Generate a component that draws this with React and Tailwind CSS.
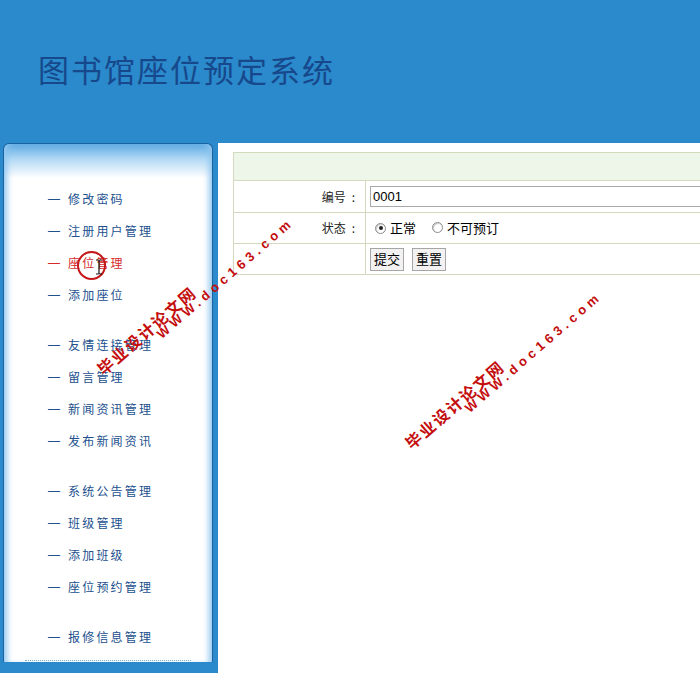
import React from 'react';

const groups = [
    ['修改密码', '注册用户管理', '座位管理', '添加座位'],
    ['友情连接管理', '留言管理', '新闻资讯管理', '发布新闻资讯'],
    ['系统公告管理', '班级管理', '添加班级', '座位预约管理'],
    ['报修信息管理'],
];

const Watermark = ({ x, y }) => (
    <div
        className="absolute pointer-events-none text-[#c40d0d] font-bold leading-none"
        style={{ left: x, top: y, transform: 'rotate(-41deg)', transformOrigin: 'left top' }}
    >
        <div className="text-[16px] tracking-[1.8px] whitespace-nowrap font-['Noto_Sans_CJK_SC',sans-serif]">毕业设计论文网</div>
        <div className="ml-[68px] mt-[-2px] text-[13px] tracking-[4.4px] whitespace-nowrap font-['Liberation_Sans',Arial,sans-serif]">WWW.doc163.com</div>
    </div>
);

const Radio = ({ checked }) => (
    <span className="inline-flex items-center justify-center w-[11px] h-[11px] rounded-full border border-[#8a8a8a] bg-white shadow-[inset_1px_1px_1px_#ccc]">
        {checked && <span className="w-[4px] h-[4px] rounded-full bg-[#222]" />}
    </span>
);

const Label = ({ text }) => (
    <span>
        {text}
        <span className="ml-[6px]">:</span>
    </span>
);

export default function App() {
    return (
        <div className="relative w-[700px] h-[673px] overflow-hidden bg-[#2a8acb] font-['Noto_Sans_CJK_SC',sans-serif]">
            <div className="h-[143px] flex items-center pl-[38px] pb-[4px]">
                <h1 className="text-[31px] text-[#17488c] tracking-[2px] font-normal">图书馆座位预定系统</h1>
            </div>

            <div className="flex h-[530px]">
                <div className="w-[218px] pl-[3px] pr-[5px]">
                    <div className="h-[519px] flex flex-col border border-b-0 border-[#1b63a0] rounded-t-[6px] bg-[linear-gradient(to_bottom,#5eaae3_0px,#b6dbf5_16px,#ffffff_34px,#ffffff_100%)] shadow-[inset_7px_0_6px_-4px_#8fc6ef,inset_-7px_0_6px_-4px_#8fc6ef]">
                        <div className="pt-[39px] pl-[44px] flex-1">
                            {groups.map((items, gi) => (
                                <ul key={gi} className={gi > 0 ? 'mt-[18px]' : ''}>
                                    {items.map((item) => {
                                        const active = item === '座位管理';
                                        return (
                                            <li
                                                key={item}
                                                className={`relative h-[32px] flex items-center text-[12px] tracking-[2.2px] ${active ? 'text-[#d42a2a]' : 'text-[#22508e]'}`}
                                            >
                                                <span className="w-[20px] font-['Liberation_Sans',sans-serif]">—</span>
                                                <span>{item}</span>
                                                {active && (
                                                    <>
                                                        <span className="absolute left-[29px] top-[4px] w-[29px] h-[29px] rounded-full border-2 border-[#c41818]" />
                                                        <svg className="absolute left-[47px] top-[12px]" width="8" height="16" viewBox="0 0 8 16">
                                                            <path d="M1 1h2.5M4.5 1H7M4 1v14M1 15h2.5M4.5 15H7" stroke="#111" strokeWidth="1.2" fill="none" />
                                                        </svg>
                                                    </>
                                                )}
                                            </li>
                                        );
                                    })}
                                </ul>
                            ))}
                        </div>
                        <div className="mx-[21px] mb-[1px] border-t border-dotted border-[#7fb0c8]" />
                    </div>
                </div>

                <div className="flex-1 bg-white overflow-hidden pt-[9px] pl-[15px] text-[12px] text-[#222]">
                    <table className="w-[560px] border-collapse">
                        <tbody>
                            <tr className="h-[28px] bg-[#eef5e9]">
                                <td colSpan={2} className="border border-[#d5d9bd]" />
                            </tr>
                            <tr className="h-[32px]">
                                <td className="w-[132px] border border-[#d5d9bd] text-right pr-[10px]"><Label text="编号" /></td>
                                <td className="border border-[#d5d9bd] pl-[4px]">
                                    <div className="h-[21px] border border-[#a9a9a9] flex items-center pl-[2px] text-[13px] text-black font-['Liberation_Sans',Arial,sans-serif]">0001</div>
                                </td>
                            </tr>
                            <tr className="h-[31px]">
                                <td className="border border-[#d5d9bd] text-right pr-[10px]"><Label text="状态" /></td>
                                <td className="border border-[#d5d9bd] pl-[9px]">
                                    <div className="flex items-center text-[13px] text-black">
                                        <Radio checked />
                                        <span className="ml-[4px]">正常</span>
                                        <span className="ml-[16px]"><Radio /></span>
                                        <span className="ml-[4px]">不可预订</span>
                                    </div>
                                </td>
                            </tr>
                            <tr className="h-[31px]">
                                <td className="border border-[#d5d9bd]" />
                                <td className="border border-[#d5d9bd] pl-[4px]">
                                    <div className="flex gap-[8px]">
                                        <button className="h-[23px] px-[3px] border border-[#a6a6a6] bg-[#f3f1f1] text-[13px] text-black">提交</button>
                                        <button className="h-[23px] px-[3px] border border-[#a6a6a6] bg-[#f3f1f1] text-[13px] text-black">重置</button>
                                    </div>
                                </td>
                            </tr>
                        </tbody>
                    </table>
                </div>
            </div>

            <Watermark x={94} y={365} />
            <Watermark x={402} y={439} />
        </div>
    );
}
